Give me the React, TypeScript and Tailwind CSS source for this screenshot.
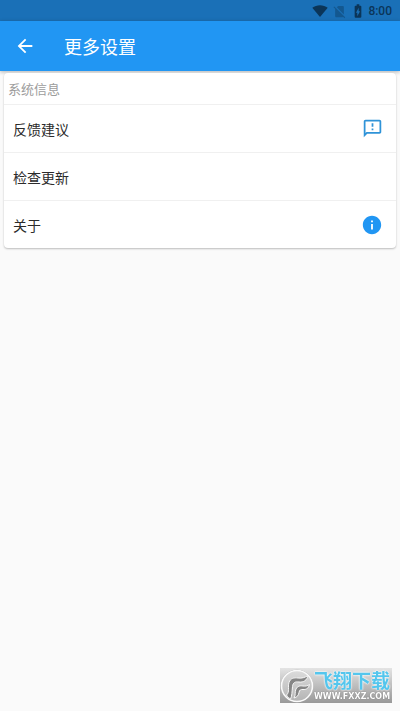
import React from "react";
import {
  MdArrowBack,
  MdBatteryChargingFull,
  MdInfo,
  MdNoSim,
  MdOutlineFeedback,
} from "react-icons/md";

interface SettingItem {
  label: string;
  icon?: React.ReactNode;
}

const items: SettingItem[] = [
  {
    label: "反馈建议",
    icon: <MdOutlineFeedback className="size-[21px] text-[#2f93d8]" />,
  },
  { label: "检查更新" },
  { label: "关于", icon: <MdInfo className="size-[22px] text-[#2196f3]" /> },
];

function StatusBar() {
  return (
    <div className="flex h-[21px] items-center justify-end bg-[#1a70b7] pt-px pr-2 text-[#0b3558]">
      <svg viewBox="0 0 16 12" className="mr-1 h-3 w-4" fill="currentColor">
        <path d="M0.3 2.8C2.4 1.2 5.2.3 8 .3s5.6.9 7.7 2.5L8 12z" />
      </svg>
      <MdNoSim className="mr-[3px] size-[15px] opacity-40" />
      <MdBatteryChargingFull className="mr-[2px] size-4" />
      <span className="text-xs font-medium">8:00</span>
    </div>
  );
}

function Watermark() {
  return (
    <div className="fixed right-2 bottom-2 flex h-[35px] w-28 items-center bg-linear-to-b from-[#e4e4e4] to-[#999999]">
      <svg viewBox="0 0 34 34" className="size-[34px] shrink-0">
        <defs>
          <linearGradient id="disc" x1="0" y1="0" x2="0" y2="1">
            <stop offset="0" stopColor="#dcdcdc" />
            <stop offset="1" stopColor="#b4b4b4" />
          </linearGradient>
        </defs>
        <circle cx="17" cy="17" r="16.2" fill="#8e8e8e" />
        <circle cx="17" cy="17" r="15.5" fill="url(#disc)" stroke="#fafafa" strokeWidth="1.6" />
        <g fill="#858585" stroke="#f8f8f8" strokeWidth="1" strokeLinejoin="round">
          <path d="M6.5 26C10 23 7.5 18 9 13.5 10.5 9 14 8.5 18 9c4 .5 7-.5 10-2.5-1 5-4.500 7-9 6.500-4-.5-6 .5-6.500 4.500-.5 5-.5 10-2 12.500-1.500-1-3-2-4-4z" />
          <path d="M14 29c2-3 .5-6 2-9 1.500-3 4-3.500 7-3 2.500.3 4.500 0 6.500-1.500-.8 4-3.500 5.300-6.500 5-2.500-.2-3.500.5-4 3-.4 2.500-1.500 4.500-5 5.500z" />
        </g>
      </svg>
      <div className="flex flex-col items-start pt-[3px] font-['DejaVu_Sans','Noto_Sans_CJK_SC',sans-serif]">
        <span className="text-[19px] leading-5 font-bold whitespace-nowrap text-[#55c6ed] [text-shadow:0_0_2px_#ffffff,0_0_2px_#ffffff]">
          飞翔下载
        </span>
        <span className="text-[8px] leading-3 font-bold whitespace-nowrap text-white [text-shadow:0_0_1px_#666666]">
          WWW.FXXZ.COM
        </span>
      </div>
    </div>
  );
}

export default function App() {
  return (
    <div className="min-h-screen bg-[#fafafa] font-[Roboto,'Noto_Sans_CJK_SC',sans-serif]">
      <StatusBar />

      <header className="flex h-[50px] items-center bg-[#2196f3] px-[14px] text-white shadow-[0_1px_4px_rgba(0,0,0,0.3)]">
        <button type="button" aria-label="返回">
          <MdArrowBack className="size-[22px]" />
        </button>
        <h1 className="ml-7 pt-[3px] text-lg">更多设置</h1>
      </header>

      <main className="px-1 pt-[2px]">
        <section className="rounded-sm bg-white shadow-[0_1px_2px_rgba(0,0,0,0.25)]">
          <h2 className="px-1 pt-[7px] pb-1 text-[13px] leading-5 text-[#9c9c9c]">
            系统信息
          </h2>
          <ul>
            {items.map((item) => (
              <li key={item.label} className="border-t border-[#f0f0f0]">
                <button
                  type="button"
                  className="flex h-[47px] w-full items-center justify-between pr-[13px] pl-[9px] text-sm text-[#2b2b2b]"
                >
                  <span className="pt-[2px]">{item.label}</span>
                  {item.icon}
                </button>
              </li>
            ))}
          </ul>
        </section>
      </main>

      <Watermark />
    </div>
  );
}
